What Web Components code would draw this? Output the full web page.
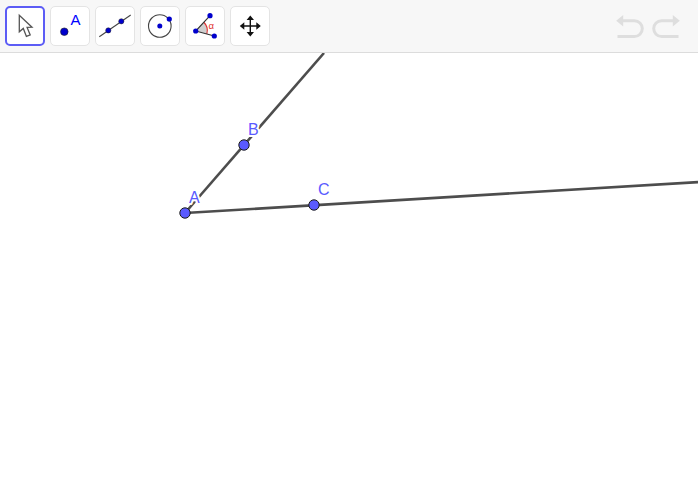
<!DOCTYPE html>
<html>
<head>
<meta charset="utf-8">
<style>
  html, body { margin: 0; padding: 0; background: #fff; }
  body { width: 698px; height: 500px; overflow: hidden; display: flex; flex-direction: column; font-family: "Liberation Sans", sans-serif; }
</style>
</head>
<body>
<geo-toolbar>
  <tool-button active><svg viewBox="0 0 40 40"><path d="M14.3 9.3 L14.3 25.8 L18.3 22.4 L21.4 30.4 L25.2 28.9 L22.1 21.4 L27 21.2 Z" fill="#fff" stroke="#555" stroke-width="1.3"/></svg></tool-button>
  <tool-button><svg viewBox="0 0 40 40"><circle cx="14.3" cy="25.7" r="3.8" fill="#0000cc" stroke="#222" stroke-width=".6"/><text x="20.6" y="19" font-family="Liberation Sans" font-size="15" fill="#0000ff">A</text></svg></tool-button>
  <tool-button><svg viewBox="0 0 40 40"><path d="M4.3 30.7 L35.7 9" stroke="#444" stroke-width="1.1"/><circle cx="13.3" cy="24.4" r="2.6" fill="#0000cc" stroke="#222" stroke-width=".5"/><circle cx="26.3" cy="15.3" r="2.6" fill="#0000cc" stroke="#222" stroke-width=".5"/></svg></tool-button>
  <tool-button><svg viewBox="0 0 40 40"><circle cx="19.8" cy="20" r="11.3" fill="none" stroke="#444" stroke-width="1.1"/><circle cx="19.8" cy="20" r="2.5" fill="#0000cc"/><circle cx="29.3" cy="13" r="2.6" fill="#0000cc"/></svg></tool-button>
  <tool-button><svg viewBox="0 0 40 40"><path d="M10.7 25 L18.8 16.3 A11.5 11.5 0 0 1 21.8 27.8 Z" fill="#d0d0d0"/><path d="M18.8 16.3 A11.5 11.5 0 0 1 21.8 27.8" fill="none" stroke="#e03030" stroke-width="1.2"/><path d="M25 9.7 L10.7 25 L29.3 30" fill="none" stroke="#333" stroke-width="1.1"/><circle cx="25" cy="9.7" r="2.6" fill="#0000cc"/><circle cx="10.7" cy="25" r="2.6" fill="#0000cc"/><circle cx="29.3" cy="30" r="2.6" fill="#0000cc"/><text x="23.5" y="23" font-family="Liberation Sans" font-size="9.5" fill="#e03030">α</text></svg></tool-button>
  <tool-button><svg viewBox="0 0 40 40"><path d="M20.3 12 L20.3 28 M12.3 20 L28.3 20" stroke="#111" stroke-width="1.4"/><path d="M20.3 9.5 L16.6 14 L24 14 Z M20.3 30.5 L16.6 26 L24 26 Z M9.8 20 L14.3 16.3 L14.3 23.7 Z M30.8 20 L26.3 16.3 L26.3 23.7 Z" fill="#111"/></svg></tool-button>
  <history-buttons slot="end"></history-buttons>
</geo-toolbar>
<geo-canvas></geo-canvas>
<script>
class GeoToolbar extends HTMLElement {
  constructor() {
    super();
    this.attachShadow({ mode: 'open' }).innerHTML = `
      <style>
        :host { display: flex; flex: none; height: 52px; background: #f7f7f7; border-bottom: 1px solid #dcdcdc; padding: 0 18.5px 0 5px; align-items: flex-start; justify-content: space-between; }
        .tools { display: flex; gap: 5px; padding-top: 6px; }
      </style>
      <div class="tools"><slot></slot></div>
      <slot name="end"></slot>`;
  }
}

class ToolButton extends HTMLElement {
  constructor() {
    super();
    this.attachShadow({ mode: 'open' }).innerHTML = `
      <style>
        :host { display: block; width: 40px; height: 40px; box-sizing: border-box; background: #fff; border: 1px solid #e4e4e4; border-radius: 5px; position: relative; }
        :host([active]) { border: 2px solid #5c5cf5; }
        ::slotted(svg) { position: absolute; left: -1px; top: -1px; width: 40px; height: 40px; }
        :host([active]) ::slotted(svg) { left: -2px; top: -2px; }
      </style>
      <slot></slot>`;
  }
}

class HistoryButtons extends HTMLElement {
  constructor() {
    super();
    this.attachShadow({ mode: 'open' }).innerHTML = `
      <style>
        :host { display: flex; gap: 8px; padding-top: 14px; }
        svg { width: 28px; height: 25px; display: block; }
        path.head { fill: #dedede; }
        path.tail { fill: none; stroke: #dedede; stroke-width: 3; }
      </style>
      <svg viewBox="0 0 28 25"><path class="head" d="M.2 6.7 L7.2 1 L7.2 12.4 Z"/><path class="tail" d="M6 6.7 L18.4 6.7 A7.9 7.9 0 0 1 18.4 22.5 L1.5 22.5"/></svg>
      <svg viewBox="0 0 28 25"><path class="head" d="M27.8 6.7 L20.8 1 L20.8 12.4 Z"/><path class="tail" d="M22 6.7 L9.6 6.7 A7.9 7.9 0 0 0 9.6 22.5 L26.5 22.5"/></svg>`;
  }
}

class GeoCanvas extends HTMLElement {
  constructor() {
    super();
    const points = [
      { name: 'A', x: 185, y: 213, lx: 189, ly: 203 },
      { name: 'B', x: 244, y: 145, lx: 248, ly: 135 },
      { name: 'C', x: 314, y: 205, lx: 318, ly: 195 }
    ];
    const off = 53; // canvas starts below the toolbar
    const labels = points.map(p => `<text x="${p.lx}" y="${p.ly - off}">${p.name}</text>`).join('');
    const dots = points.map(p => `<circle cx="${p.x}" cy="${p.y - off}" r="5.2" />`).join('');
    this.attachShadow({ mode: 'open' }).innerHTML = `
      <style>
        :host { display: block; flex: 1; background: #fff; }
        svg { display: block; width: 100%; height: 100%; }
        line { stroke: #4d4d4d; stroke-width: 2.6; }
        circle { fill: #5a5aff; stroke: #1a1a1a; stroke-width: 1; }
        text { font: 16px "Liberation Sans", sans-serif; fill: #5a5aff; stroke: #fff; stroke-width: 4px; paint-order: stroke; stroke-linejoin: round; }
      </style>
      <svg viewBox="0 0 698 447">
        <line x1="185" y1="160" x2="324" y2="0" />
        <line x1="185" y1="160" x2="698" y2="129.1" />
        ${labels}
        ${dots}
      </svg>`;
  }
}

customElements.define('geo-toolbar', GeoToolbar);
customElements.define('tool-button', ToolButton);
customElements.define('history-buttons', HistoryButtons);
customElements.define('geo-canvas', GeoCanvas);
</script>
</body>
</html>
